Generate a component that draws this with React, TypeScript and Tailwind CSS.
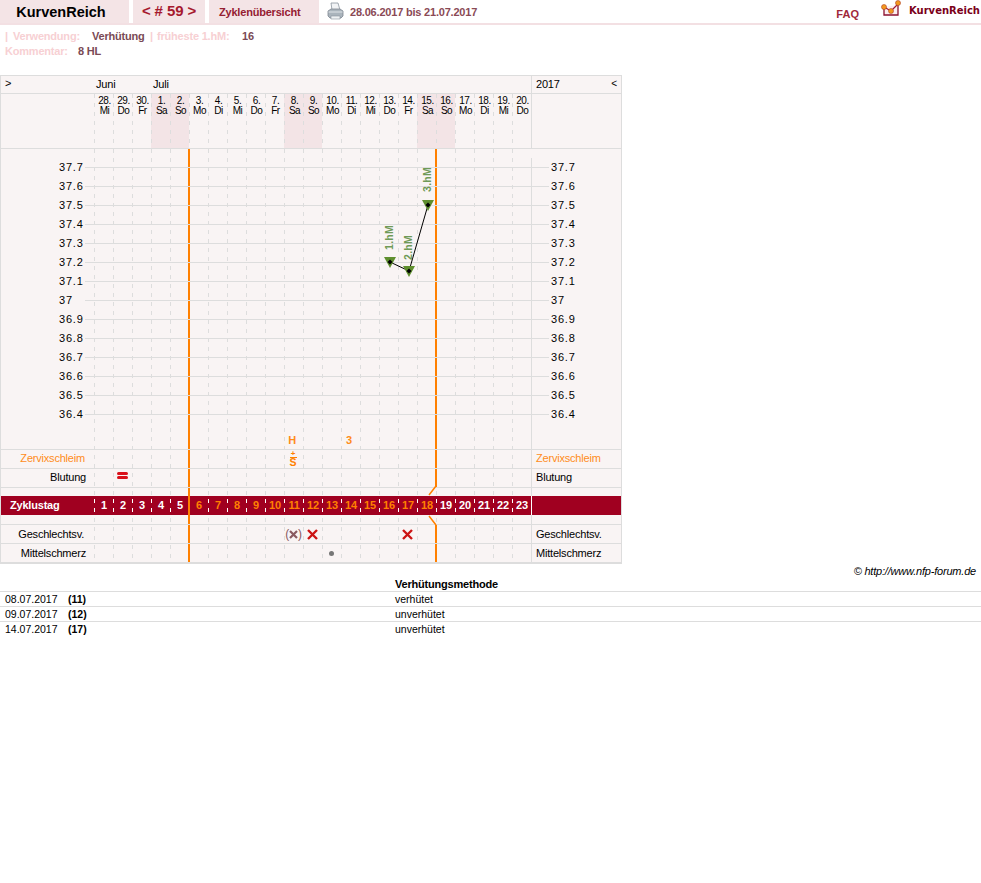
import React from "react";

const days: [string, string, boolean][] = [
  ["28.", "Mi", false], ["29.", "Do", false], ["30.", "Fr", false], ["1.", "Sa", true], ["2.", "So", true],
  ["3.", "Mo", false], ["4.", "Di", false], ["5.", "Mi", false], ["6.", "Do", false], ["7.", "Fr", false],
  ["8.", "Sa", true], ["9.", "So", true], ["10.", "Mo", false], ["11.", "Di", false], ["12.", "Mi", false],
  ["13.", "Do", false], ["14.", "Fr", false], ["15.", "Sa", true], ["16.", "So", true], ["17.", "Mo", false],
  ["18.", "Di", false], ["19.", "Mi", false], ["20.", "Do", false],
];
const temps = ["37.7", "37.6", "37.5", "37.4", "37.3", "37.2", "37.1", "37", "36.9", "36.8", "36.7", "36.6", "36.5", "36.4"];
const cols = Array.from({ length: 23 }, (_, i) => i);

const dash = "bg-[repeating-linear-gradient(to_bottom,#dddddd_0,#dddddd_4px,transparent_4px,transparent_9px)] bg-[length:1px_100%] bg-no-repeat";
const dashWhite = "bg-[repeating-linear-gradient(to_bottom,#ffffff_0,#ffffff_4px,transparent_4px,transparent_9px)] bg-[length:1px_100%] bg-[position:0_3px] bg-no-repeat";

function Row({ h, left, right, children, line = true, shift = "" }: { h: string; left?: React.ReactNode; right?: React.ReactNode; children?: React.ReactNode; line?: boolean; shift?: string }) {
  return (
    <div className={`relative z-10 flex ${h} ${line ? "border-b border-[#dddddd]" : ""}`}>
      <div className={`w-[93px] shrink-0 flex items-center justify-end text-[11px] ${shift}`}>{left}</div>
      <div className="w-[437px] shrink-0 flex">{children}</div>
      <div className={`flex-1 border-l border-[#dddddd] pl-[4px] flex items-center text-[11px] leading-none ${shift}`}>{right}</div>
    </div>
  );
}

function Cell({ i, children, className = "" }: { i: number; children?: React.ReactNode; className?: string }) {
  return <div data-col={i} className={`w-[19px] shrink-0 flex items-center justify-center ${className}`}>{children}</div>;
}

function RedX() {
  return (
    <svg width="11" height="11" viewBox="0 0 11 11">
      <path d="M1 1 L10 10 M10 1 L1 10" stroke="#cc1414" strokeWidth="2.4" fill="none" />
    </svg>
  );
}

function Printer() {
  return (
    <svg width="17" height="18" viewBox="0 0 17 18" className="shrink-0">
      <path d="M4 1 L11 1 L13 8 L5 8 Z" fill="#f2f4f6" stroke="#8b96a0" strokeWidth="0.8" />
      <path d="M1 9 L4 7 L13 7 L16 9 L16 14 L14 16 L3 16 L1 14 Z" fill="#aab4bc" stroke="#7d8790" strokeWidth="0.8" />
      <path d="M1.5 10 L15.5 10" stroke="#dfe4e8" strokeWidth="1" />
      <path d="M4 14 L13 14 L13 17 L4 17 Z" fill="#eef1f3" stroke="#8b96a0" strokeWidth="0.6" />
    </svg>
  );
}

function Logo() {
  return (
    <svg width="20" height="18" viewBox="0 0 20 18" className="shrink-0">
      <path d="M3 7 L3 15 L17 15 L17 5" fill="#fbeef0" stroke="#8c1230" strokeWidth="1.3" />
      <path d="M3 7 L10 11 L17 4" fill="none" stroke="#a01834" strokeWidth="1.2" />
      <circle cx="3" cy="7" r="2.5" fill="#f39a1e" stroke="#b0402a" strokeWidth="0.6" />
      <circle cx="10" cy="11" r="2.5" fill="#f39a1e" stroke="#b0402a" strokeWidth="0.6" />
      <circle cx="17" cy="3" r="2.5" fill="#f39a1e" stroke="#b0402a" strokeWidth="0.6" />
    </svg>
  );
}

function Marker({ x, y }: { x: number; y: number }) {
  return (
    <g>
      <path d={`M${x - 6} ${y - 5} L${x + 6} ${y - 5} L${x} ${y + 6} Z`} fill="#5f8f2f" />
      <path d={`M${x} ${y - 2.5} L${x + 2.5} ${y} L${x} ${y + 2.5} L${x - 2.5} ${y} Z`} fill="#000000" />
    </g>
  );
}

function HmLabel({ x, y, t }: { x: number; y: number; t: string }) {
  return (
    <text x={x} y={y} transform={`rotate(-90 ${x} ${y})`} fontSize="10.5" letterSpacing="0.3" fontWeight="bold" fill="#6f9a57" fontFamily="'Liberation Sans', Arial, sans-serif">
      {t}
    </text>
  );
}

export default function App() {
  return (
    <div className="min-h-[883px] bg-white text-black font-['Liberation_Sans',Arial,sans-serif] text-[11px] tracking-[-0.2px]">
      {/* top bar */}
      <div className="flex h-[25px] border-b-2 border-[#f3e0e3] items-stretch">
        <div className="w-[129px] bg-[#f4e4e6] flex items-center justify-center pr-[7px] pt-[2px] text-[14.5px] tracking-normal font-bold">KurvenReich</div>
        <div className="ml-[4px] w-[72px] bg-[#f4e4e6] flex items-center justify-center text-[15px] tracking-[-0.1px] font-bold text-[#a6192e]">{"< # 59 >"}</div>
        <div className="ml-[4px] w-[110px] bg-[#f4e4e6] flex items-center pl-[10px] pt-[2px] font-bold text-[#952032]">Zyklenübersicht</div>
        <div className="ml-[8px] flex items-center -mt-[1px]"><Printer /></div>
        <div className="ml-[6px] flex items-center pt-[2px] font-bold text-[#8a4a55]">28.06.2017 bis 21.07.2017</div>
        <div className="ml-auto flex items-start">
          <div className="mt-[6px] mr-[22px] font-bold tracking-normal text-[#a0283a]">FAQ</div>
          <Logo />
          <div className="ml-[8px] mr-[1px] mt-[3px] font-['DejaVu_Sans',sans-serif] text-[10px] tracking-normal font-bold text-[#7a0019]">KurvenReich</div>
        </div>
      </div>

      {/* meta */}
      <div className="pl-[5px] pt-[4px] h-[50px] font-bold text-[#f7d0d3] leading-[15px]">
        <div className="flex">
          <span className="w-[8px]">|</span>
          <span className="w-[79px]">Verwendung:</span>
          <span className="w-[58px] text-[#7a4a55]">Verhütung</span>
          <span className="w-[7px]">|</span>
          <span className="w-[85px]">früheste 1.hM:</span>
          <span className="text-[#7a4a55]">16</span>
        </div>
        <div className="flex">
          <span className="w-[73px]">Kommentar:</span>
          <span className="text-[#7a4a55]">8 HL</span>
        </div>
      </div>

      {/* chart table */}
      <div className="w-[622px] border border-[#dddddd] bg-[#f9f4f4]">
        <div className="relative">
          {/* column dashes */}
          <div className="absolute left-[93px] top-[73px] h-[414px] flex z-0">
            {cols.map((i) => <div key={i} className={`w-[19px] ${dash}`} />)}
          </div>
          {/* orange phase lines */}
          <div className="absolute z-0 left-[187px] top-[73px] w-[2px] h-[414px] bg-[#ff8000]" />
          <div className="absolute z-0 left-[434px] top-[73px] w-[2px] h-[338px] bg-[#ff8000]" />
          <div className="absolute z-0 left-[434px] top-[449px] w-[2px] h-[38px] bg-[#ff8000]" />

          {/* month row */}
          <div className="relative z-10 flex h-[18px] border-b border-[#dddddd] items-center">
            <div className="w-[93px] shrink-0 pl-[4px] -mt-[2px]">&gt;</div>
            <div className="w-[437px] shrink-0 flex pl-[2px]">
              <span className="w-[57px]">Juni</span>
              <span>Juli</span>
            </div>
            <div className="flex-1 h-full border-l border-[#dddddd] pl-[4px] pr-[4px] flex items-center justify-between">
              <span>2017</span>
              <span className="-mt-[2px] text-[10px]">&lt;</span>
            </div>
          </div>

          {/* days row */}
          <div className="relative z-10 flex h-[55px] border-b border-[#dddddd]">
            <div className="w-[93px] shrink-0" />
            <div className="w-[437px] shrink-0 flex">
              {days.map(([d, n, we], i) => (
                <div key={i} className={`w-[19px] shrink-0 pl-[2px] pt-[2px] text-center text-[10px] leading-[10px] tracking-[-0.5px] ${we ? "bg-[#f3e4e6]" : ""} ${dash}`}>
                  <div>{d}</div>
                  <div>{n}</div>
                </div>
              ))}
            </div>
            <div className="flex-1 border-l border-[#dddddd]" />
          </div>

          {/* temperature area */}
          <div className="relative z-10 h-[301px] border-b border-[#dddddd] pt-[9px]">
            {temps.map((t) => (
              <div key={t} className="flex h-[19px] items-center">
                <div className="w-[93px] shrink-0 flex items-center pl-[58px]">
                  <span className="w-[26px] tracking-[0.8px] leading-none">{t}</span>
                  <span className="flex-1 h-px bg-[#dddddd]" />
                </div>
                <div className="w-[437px] shrink-0 h-px bg-[#dddddd]" />
                <div className="flex-1 self-stretch border-l border-[#dddddd] flex items-center">
                  <span className="w-[17px] h-px bg-[#dddddd]" />
                  <span className="ml-[2px] tracking-[0.8px] leading-none">{t}</span>
                </div>
              </div>
            ))}
            <div className="flex h-[25px]">
              <div className="w-[93px] shrink-0" />
              <div className="w-[437px] shrink-0 flex">
                {cols.map((i) => (
                  <Cell key={i} i={i} className="pt-[8px] pr-[3px] text-[#ff8c1a] font-bold text-[11px] leading-none">
                    {i === 10 ? "H" : i === 13 ? "3" : null}
                  </Cell>
                ))}
              </div>
              <div className="flex-1 border-l border-[#dddddd]" />
            </div>
          </div>

          <Row h="h-[19px]" shift="pb-[2px]" left={<span className="pr-[9px] text-[#ff8c1a]">Zervixschleim</span>} right={<span className="text-[#ff8c1a]">Zervixschleim</span>}>
            {cols.map((i) => (
              <Cell key={i} i={i} className="flex-col justify-start pr-[1px] text-[#ff8000]">
                {i === 10 ? (
                  <>
                    <span className="h-[6px] mt-[1px] text-[8px] leading-[6px] font-bold">+</span>
                    <span className="h-[9px] w-[7px] border-t border-[#ff8000] text-center text-[10.5px] leading-[8px] font-bold">S</span>
                  </>
                ) : null}
              </Cell>
            ))}
          </Row>
          <Row h="h-[19px]" shift="pb-[2px]" left={<span className="pr-[8px]">Blutung</span>} right="Blutung">
            {cols.map((i) => (
              <Cell key={i} i={i} className="pb-[6px]">
                {i === 1 ? (
                  <span className="flex flex-col gap-[1px]">
                    <span className="w-[11px] h-[3px] rounded-full bg-[#d9101a]" />
                    <span className="w-[11px] h-[3px] rounded-full bg-[#d9101a]" />
                  </span>
                ) : null}
              </Cell>
            ))}
          </Row>
          <Row h="h-[8px]" line={false} />

          {/* cycle day band */}
          <div className="relative z-10 flex h-[19px] bg-[#a00020] font-bold text-white">
            <div className="w-[93px] shrink-0 pl-[9px] flex items-center">Zyklustag</div>
            <div className="relative w-[437px] shrink-0 flex">
              {cols.map((i) => (
                <div key={i} className={`w-[19px] shrink-0 flex items-center justify-center pl-[1px] ${i >= 5 && i <= 17 ? "text-[#ff8000]" : ""} ${dashWhite}`}>
                  {i + 1}
                </div>
              ))}
              <span className="absolute left-[94px] top-0 w-[2px] h-full bg-[#ff8000]" />
            </div>
            <div className="flex-1 border-l border-white" />
          </div>

          <Row h="h-[10px]" />
          <Row h="h-[19px]" shift="pt-[1px]" left={<span className="pr-[10px]">Geschlechtsv.</span>} right="Geschlechtsv.">
            {cols.map((i) => (
              <Cell key={i} i={i}>
                {i === 10 ? (
                  <span className="flex items-center text-[12px] text-[#8a5a60] leading-none">
                    (<svg width="9" height="9" viewBox="0 0 9 9"><path d="M1 1 L8 8 M8 1 L1 8" stroke="#8a5a60" strokeWidth="2.2" fill="none" /></svg>)
                  </span>
                ) : i === 11 || i === 16 ? <RedX /> : null}
              </Cell>
            ))}
          </Row>
          <Row h="h-[19px]" left={<span className="pr-[8px]">Mittelschmerz</span>} right="Mittelschmerz">
            {cols.map((i) => (
              <Cell key={i} i={i} className="pr-[1px]">
                {i === 12 ? <span className="w-[5px] h-[5px] rounded-full bg-[#777777]" /> : null}
              </Cell>
            ))}
          </Row>

          {/* temperature curve */}
          <svg className="absolute left-0 top-0 z-20 pointer-events-none" width="620" height="487" viewBox="1 76 620 487">
            <path d="M436 486 L429 495 M429 516 L436 525" stroke="#ff8000" strokeWidth="1.5" fill="none" />
            <path d="M390 262 L409 271 L428 205" stroke="#000000" strokeWidth="1" fill="none" />
            <Marker x={390} y={262} />
            <Marker x={409} y={271} />
            <Marker x={428} y={205} />
            <HmLabel x={393} y={250} t="1.hM" />
            <HmLabel x={412} y={260} t="2.hM" />
            <HmLabel x={431} y={192} t="3.hM" />
          </svg>
        </div>
      </div>

      {/* footer */}
      <div className="flex justify-end pr-[5px] h-[14px] leading-[14px] italic">© http://www.nfp-forum.de</div>
      <div className="pl-[395px] h-[13px] leading-[13px] font-bold">Verhütungsmethode</div>
      {[
        ["08.07.2017", "(11)", "verhütet"],
        ["09.07.2017", "(12)", "unverhütet"],
        ["14.07.2017", "(17)", "unverhütet"],
      ].map(([d, n, m]) => (
        <div key={d} className="flex h-[15px] border-t border-[#dddddd] items-center pt-[2px] text-[10.5px] tracking-normal">
          <span className="w-[68px] pl-[5px]">{d}</span>
          <span className="w-[327px] font-bold">{n}</span>
          <span>{m}</span>
        </div>
      ))}
    </div>
  );
}
